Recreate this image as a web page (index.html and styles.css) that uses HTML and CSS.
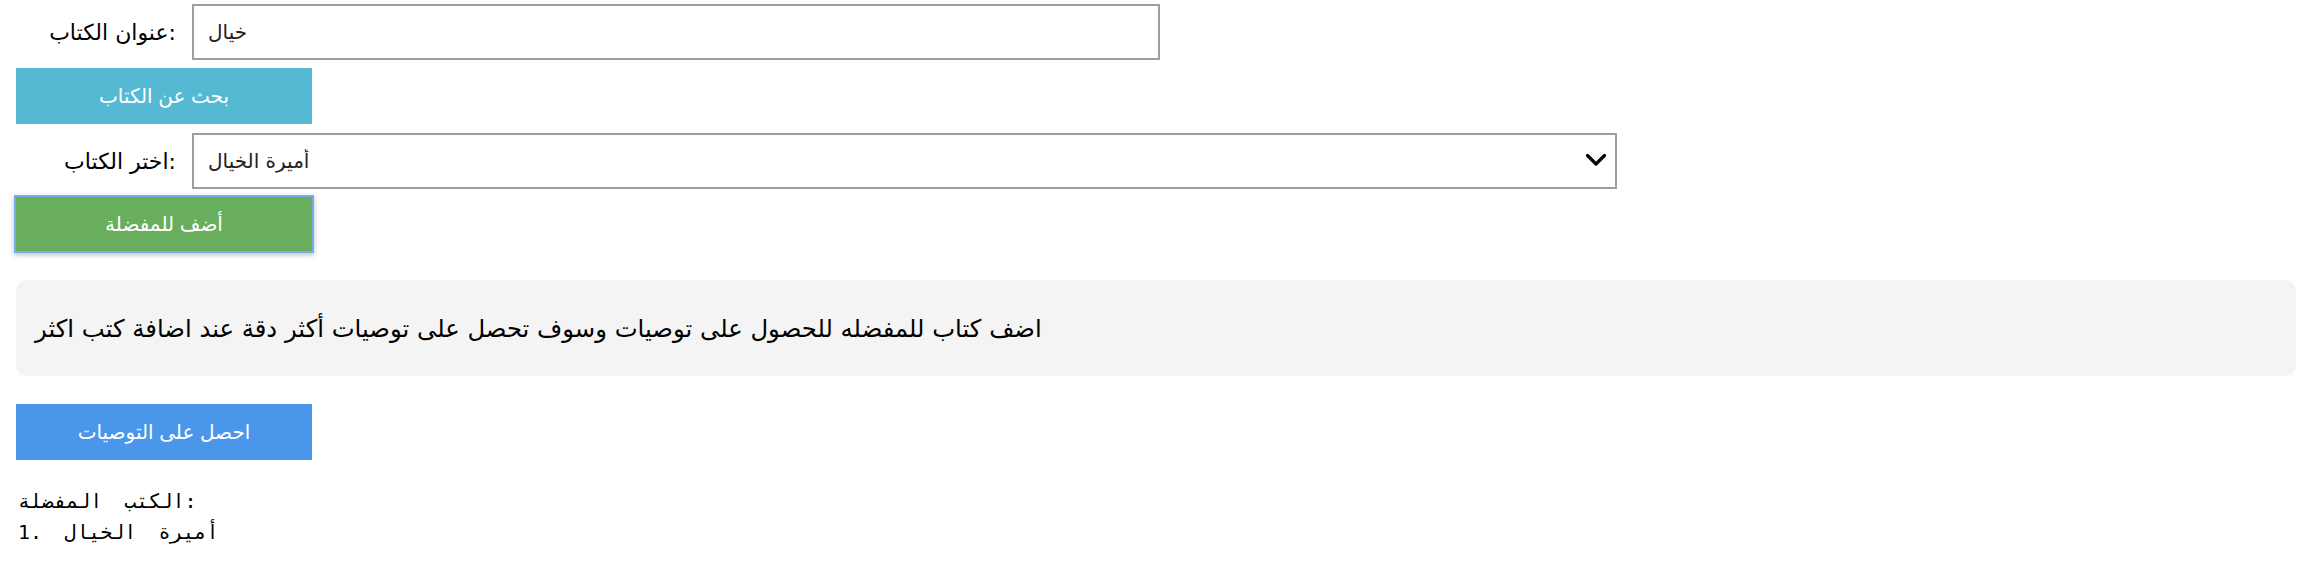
FILE: index.html
```html
<!DOCTYPE html>
<html lang="ar">
<head>
<meta charset="utf-8">
<title>توصيات الكتب</title>
<link rel="stylesheet" href="styles.css">
</head>
<body>
<div class="page">
  <div class="field-row">
    <label class="field-label" for="title">عنوان الكتاب:</label>
    <input class="text-input" id="title" type="text" value="خيال">
  </div>
  <button class="btn btn-search">بحث عن الكتاب</button>
  <div class="field-row">
    <label class="field-label" for="book">اختر الكتاب:</label>
    <div class="select-wrap">
      <select class="select-input" id="book">
        <option>أميرة الخيال</option>
      </select>
      <svg class="chevron" viewBox="0 0 22 14" width="22" height="14" aria-hidden="true">
        <path d="M2.5 2.5 L11 11 L19.5 2.5" fill="none" stroke="#000" stroke-width="3.2" stroke-linecap="round" stroke-linejoin="round"/>
      </svg>
    </div>
  </div>
  <button class="btn btn-fav">أضف للمفضلة</button>
  <div class="info-box">اضف كتاب للمفضله للحصول على توصيات وسوف تحصل على توصيات أكثر دقة عند اضافة كتب اكثر</div>
  <button class="btn btn-rec">احصل على التوصيات</button>
  <pre class="fav-list">الكتب المفضلة:
1. أميرة الخيال</pre>
</div>
</body>
</html>
```

FILE: styles.css
```css
html, body {
  margin: 0;
  padding: 0;
  background: #ffffff;
}

body {
  font-family: "DejaVu Sans", "Noto Sans", sans-serif;
  color: #000;
}

.page {
  display: flex;
  flex-direction: column;
  align-items: flex-start;
  padding: 4px 17px 0 16px;
}

.field-row {
  display: grid;
  grid-template-columns: 160px auto;
  column-gap: 16px;
  align-items: center;
}

.field-label {
  text-align: right;
  font-size: 22px;
  color: #000;
}

.text-input {
  box-sizing: border-box;
  width: 968px;
  height: 56px;
  border: 2px solid #9e9e9e;
  padding: 0 14px;
  font-family: "DejaVu Sans", sans-serif;
  font-size: 20px;
  color: #222;
  background: #fff;
  outline: none;
}

.select-wrap {
  position: relative;
  width: 1425px;
  height: 56px;
}

.select-input {
  box-sizing: border-box;
  width: 100%;
  height: 56px;
  border: 2px solid #9e9e9e;
  border-radius: 0;
  padding: 0 14px;
  font-family: "DejaVu Sans", sans-serif;
  font-size: 20px;
  color: #222;
  background: #fff;
  -webkit-appearance: none;
  appearance: none;
  outline: none;
}

.chevron {
  position: absolute;
  right: 10px;
  top: 20px;
  pointer-events: none;
}

.btn {
  box-sizing: border-box;
  width: 296px;
  height: 56px;
  border: none;
  color: #fff;
  font-family: "Liberation Sans", "DejaVu Sans", sans-serif;
  font-size: 20px;
  cursor: pointer;
}

.btn-search {
  background: #56b9d3;
  margin-top: 8px;
  margin-bottom: 9px;
}

.btn-fav {
  background: #68ae5c;
  width: 300px;
  height: 58px;
  margin-top: 6px;
  margin-left: -2px;
  border: 2px solid #76aeec;
  box-shadow: 0 2px 5px rgba(0, 0, 0, 0.25);
}

.info-box {
  box-sizing: border-box;
  align-self: stretch;
  margin-top: 27px;
  height: 96px;
  padding: 0 19px;
  display: flex;
  align-items: center;
  background: #f4f4f4;
  border-radius: 10px;
  font-size: 24.3px;
  color: #000;
}

.btn-rec {
  background: #4a96eb;
  margin-top: 28px;
}

.fav-list {
  margin: 26px 0 0 2px;
  font-family: "DejaVu Sans Mono", "Liberation Mono", monospace;
  font-size: 20px;
  line-height: 31px;
  word-spacing: 10px;
  color: #000;
}
```
